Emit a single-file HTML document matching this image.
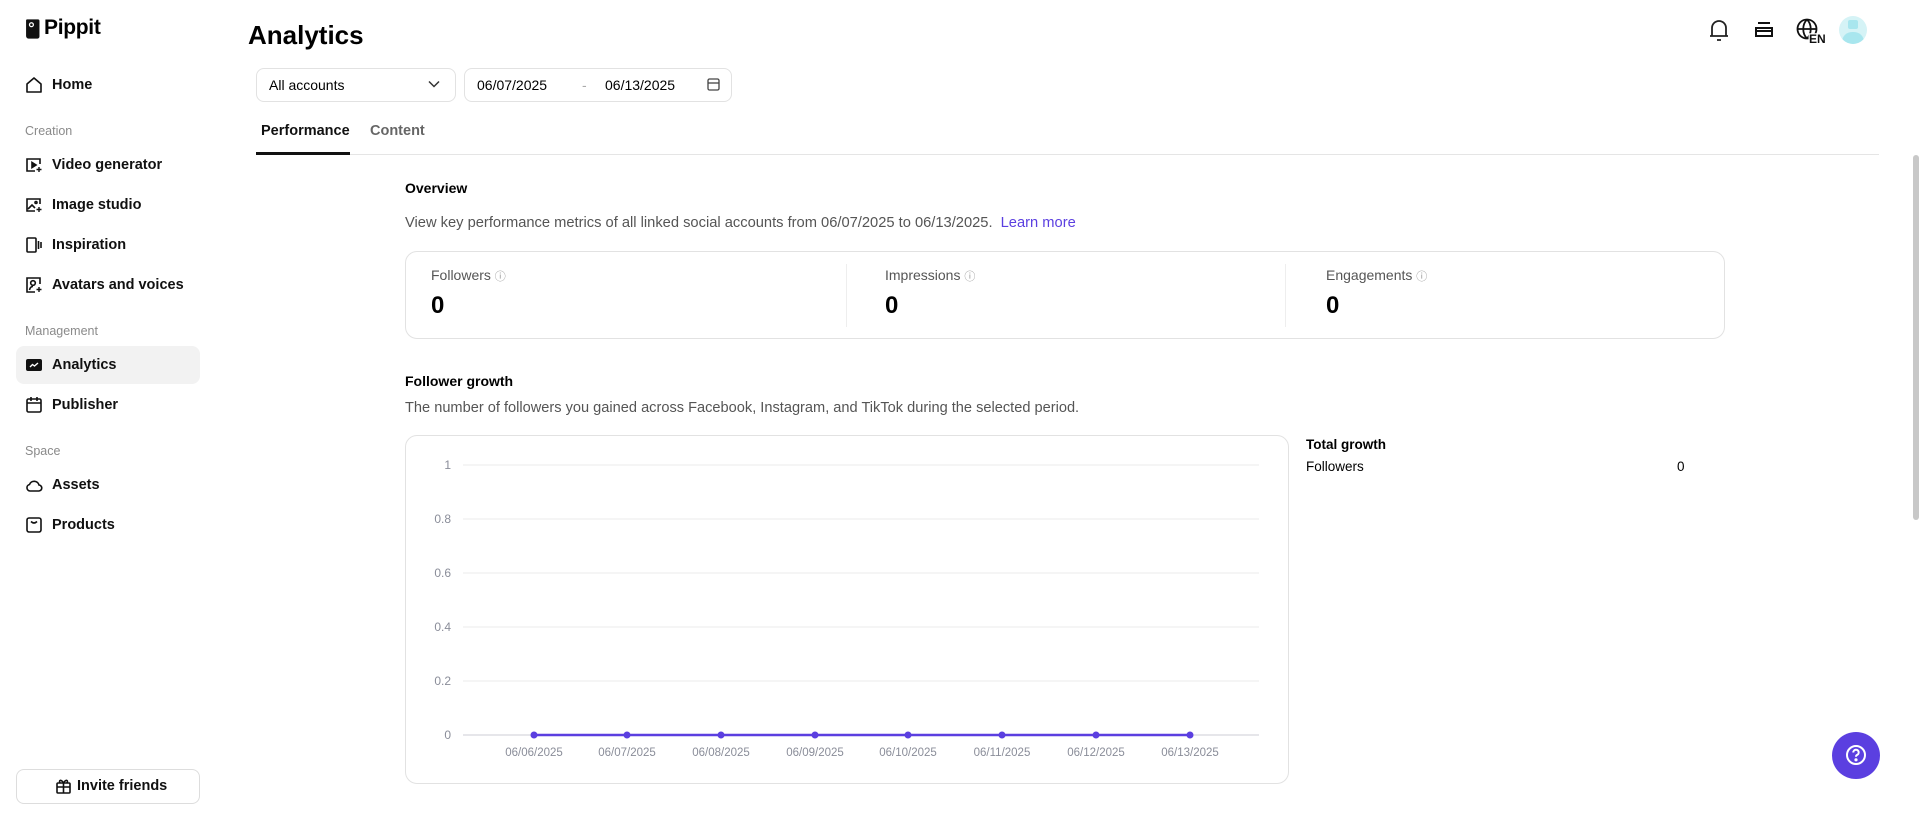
<!DOCTYPE html>
<html><head><meta charset="utf-8">
<style>
*{box-sizing:border-box;margin:0;padding:0}
body{width:1919px;height:813px;overflow:hidden;background:#fff;font-family:"Liberation Sans",sans-serif;color:#000;position:relative}
.a{position:absolute;white-space:nowrap}
.nav{font-size:14.5px;font-weight:bold;color:#111}
.sec{font-size:12.5px;color:#8a8a8a}
.ic{position:absolute;left:25px;width:18px;height:18px}
.gray{color:#555}
</style></head><body>

<!-- logo -->
<svg class="a" style="left:25px;top:18px" width="15" height="22" viewBox="0 0 14 20"><path d="M2 1h10a1.5 1.5 0 0 1 1.5 1.5V17a2 2 0 0 1-2 2H3.5A2.5 2.5 0 0 1 1 16.5V2a1 1 0 0 1 1-1z" fill="#111"/><circle cx="6" cy="6" r="1.8" fill="none" stroke="#fff" stroke-width="1.2"/></svg>
<div class="a" style="left:44px;top:16px;font-size:21px;font-weight:bold;letter-spacing:-0.3px">Pippit</div>

<svg class="ic" style="top:76px" viewBox="0 0 18 18" fill="none" stroke="#111" stroke-width="1.6"><path d="M2 8L9 2l7 6v8H2z" stroke-linejoin="round"/></svg>
<div class="a nav" style="left:52px;top:77px">Home</div>
<div class="a sec" style="left:25px;top:124px">Creation</div>
<svg class="ic" style="top:156px" viewBox="0 0 18 18" fill="none" stroke="#111" stroke-width="1.6"><path d="M15 8V3H2v12h8"/><path d="M7 6.5v5l4-2.5z" fill="#111"/><path d="M14 11v5M11.5 13.5h5" stroke-width="1.4"/></svg>
<div class="a nav" style="left:52px;top:157px">Video generator</div>
<svg class="ic" style="top:196px" viewBox="0 0 18 18" fill="none" stroke="#111" stroke-width="1.6"><path d="M15 8V3H2v12h8"/><path d="M3 13l4-4 3 3"/><circle cx="11" cy="6.5" r="1"/><path d="M14 11v5M11.5 13.5h5" stroke-width="1.4"/></svg>
<div class="a nav" style="left:52px;top:197px">Image studio</div>
<svg class="ic" style="top:236px" viewBox="0 0 18 18" fill="none" stroke="#111" stroke-width="1.6"><rect x="2" y="2" width="9" height="14" rx="1"/><path d="M13.5 5v8M16 6v6"/></svg>
<div class="a nav" style="left:52px;top:237px">Inspiration</div>
<svg class="ic" style="top:276px" viewBox="0 0 18 18" fill="none" stroke="#111" stroke-width="1.6"><path d="M15 8V2H2v14h8"/><circle cx="8" cy="7" r="2.3"/><path d="M4.5 14c.5-2.5 2-3.5 3.5-3.5"/><path d="M14 11v5M11.5 13.5h5" stroke-width="1.4"/></svg>
<div class="a nav" style="left:52px;top:277px">Avatars and voices</div>
<div class="a sec" style="left:25px;top:324px">Management</div>
<div class="a" style="left:16px;top:346px;width:184px;height:38px;background:#f2f2f2;border-radius:8px"></div>
<svg class="ic" style="top:356px" viewBox="0 0 18 18"><rect x="1" y="3" width="16" height="12" rx="2" fill="#111"/><path d="M5 11l2.5-2.5 2 1.5L13 7" fill="none" stroke="#fff" stroke-width="1.4"/></svg>
<div class="a nav" style="left:52px;top:357px">Analytics</div>
<svg class="ic" style="top:396px" viewBox="0 0 18 18" fill="none" stroke="#111" stroke-width="1.6"><rect x="2" y="3" width="14" height="13" rx="1.5"/><path d="M2 7h14M6 1v4M12 1v4"/></svg>
<div class="a nav" style="left:52px;top:397px">Publisher</div>
<div class="a sec" style="left:25px;top:444px">Space</div>
<svg class="ic" style="top:476px" viewBox="0 0 18 18" fill="none" stroke="#111" stroke-width="1.6"><path d="M5 15h8.5a3 3 0 0 0 .5-6 5 5 0 0 0-9.5-.5A3.3 3.3 0 0 0 5 15z"/></svg>
<div class="a nav" style="left:52px;top:477px">Assets</div>
<svg class="ic" style="top:516px" viewBox="0 0 18 18" fill="none" stroke="#111" stroke-width="1.6"><rect x="2" y="2" width="14" height="14" rx="2"/><path d="M6 5.5q3 3 6 0"/></svg>
<div class="a nav" style="left:52px;top:517px">Products</div>

<div class="a" style="left:16px;top:769px;width:184px;height:35px;border:1px solid #ddd;border-radius:8px"></div>
<svg class="a" style="left:55px;top:777px" width="17" height="18" viewBox="0 0 17 18" fill="none" stroke="#111" stroke-width="1.6"><rect x="2" y="6" width="13" height="10" rx="1"/><path d="M2 10h13M8.5 6v10M8.5 6C6 2 3.5 3 5 6M8.5 6c2.5-4 5-3 3.5 0"/></svg>
<div class="a nav" style="left:77px;top:778px">Invite friends</div>

<!-- header -->
<div class="a" style="left:248px;top:20px;font-size:26px;font-weight:bold">Analytics</div>
<svg class="a" style="left:1708px;top:18px" width="22" height="24" viewBox="0 0 22 24" fill="none" stroke="#222" stroke-width="1.8"><path d="M4 18V10a7 7 0 0 1 14 0v8M2 18h18M9 22h4"/></svg>
<svg class="a" style="left:1754px;top:20px" width="20" height="20" viewBox="0 0 20 20" fill="none" stroke="#111" stroke-width="2"><path d="M4 3h12M2 8h16v8H2z"/><path d="M2 11h16"/></svg>
<svg class="a" style="left:1796px;top:18px" width="34" height="26" viewBox="0 0 34 26" fill="none" stroke="#111" stroke-width="1.8"><circle cx="11" cy="11" r="9.5"/><path d="M1.5 11h19M11 1.5c-5 5-5 14 0 19M11 1.5c5 5 5 14 0 19"/><text x="13" y="25" font-family="Liberation Sans" font-weight="bold" font-size="12" fill="#111" stroke="#fff" stroke-width="2.5" paint-order="stroke">EN</text></svg>
<div class="a" style="left:1839px;top:16px;width:28px;height:28px;border-radius:50%;background:#d5f3f6;overflow:hidden"><div style="position:absolute;left:9px;top:4px;width:10px;height:9px;background:#a8e6ee;border-radius:2px"></div><div style="position:absolute;left:3px;top:16px;width:22px;height:16px;background:#a8e6ee;border-radius:10px 10px 0 0"></div></div>

<!-- filters -->
<div class="a" style="left:256px;top:68px;width:200px;height:34px;border:1px solid #e2e2e2;border-radius:8px"></div>
<div class="a" style="left:269px;top:77px;font-size:14px">All accounts</div>
<svg class="a" style="left:428px;top:80px" width="12" height="8" viewBox="0 0 12 8" fill="none" stroke="#333" stroke-width="1.5"><path d="M1 1.5l5 5 5-5"/></svg>
<div class="a" style="left:464px;top:68px;width:268px;height:34px;border:1px solid #e2e2e2;border-radius:8px"></div>
<div class="a" style="left:477px;top:77px;font-size:14px">06/07/2025</div>
<div class="a" style="left:582px;top:77px;font-size:14px;color:#aaa">-</div>
<div class="a" style="left:605px;top:77px;font-size:14px">06/13/2025</div>
<svg class="a" style="left:707px;top:77px" width="13" height="14" viewBox="0 0 13 14" fill="none" stroke="#444" stroke-width="1.3"><rect x="1" y="2" width="11" height="11" rx="1.5"/><path d="M1 6h11"/></svg>

<div class="a" style="left:261px;top:123px;font-size:14.5px;font-weight:bold;color:#111">Performance</div>
<div class="a" style="left:370px;top:123px;font-size:14.5px;font-weight:bold;color:#666">Content</div>
<div class="a" style="left:256px;top:154px;width:1623px;height:1px;background:#e5e5e5"></div>
<div class="a" style="left:256px;top:152px;width:94px;height:3px;background:#111"></div>

<!-- scrollbar -->
<div class="a" style="left:1913px;top:155px;width:6px;height:365px;background:#c8c8c8;border-radius:3px"></div>

<!-- overview -->
<div class="a" style="left:405px;top:180px;font-size:14px;font-weight:bold">Overview</div>
<div class="a gray" style="left:405px;top:215px;font-size:14.7px">View key performance metrics of all linked social accounts from 06/07/2025 to 06/13/2025. <span style="color:#5b3fe0;margin-left:4px">Learn more</span></div>
<div class="a" style="left:405px;top:251px;width:1320px;height:88px;border:1px solid #e2e2e2;border-radius:12px"></div>
<div class="a" style="left:846px;top:264px;width:1px;height:63px;background:#eee"></div>
<div class="a" style="left:1285px;top:264px;width:1px;height:63px;background:#eee"></div>
<div class="a gray" style="left:431px;top:267px;font-size:14px">Followers <span style="font-size:11px;color:#999">ⓘ</span></div>
<div class="a gray" style="left:885px;top:267px;font-size:14px">Impressions <span style="font-size:11px;color:#999">ⓘ</span></div>
<div class="a gray" style="left:1326px;top:267px;font-size:14px">Engagements <span style="font-size:11px;color:#999">ⓘ</span></div>
<div class="a" style="left:431px;top:292px;font-size:24px;font-weight:bold">0</div>
<div class="a" style="left:885px;top:292px;font-size:24px;font-weight:bold">0</div>
<div class="a" style="left:1326px;top:292px;font-size:24px;font-weight:bold">0</div>

<!-- follower growth -->
<div class="a" style="left:405px;top:373px;font-size:14px;font-weight:bold">Follower growth</div>
<div class="a gray" style="left:405px;top:400px;font-size:14.6px">The number of followers you gained across Facebook, Instagram, and TikTok during the selected period.</div>
<div class="a" style="left:405px;top:435px;width:884px;height:349px;border:1px solid #e2e2e2;border-radius:12px"></div>
<svg class="a" style="left:0;top:0" width="1919" height="813">
<g stroke="#f2f2f2" stroke-width="1.5"><path d="M463 465H1259M463 519H1259M463 573H1259M463 627H1259M463 681H1259"/></g>
<path d="M463 735H1259" stroke="#e6e6ea" stroke-width="2"/>
<g font-family="Liberation Sans" font-size="12" fill="#8a8d99" text-anchor="end"><text x="451" y="469">1</text><text x="451" y="523">0.8</text><text x="451" y="577">0.6</text><text x="451" y="631">0.4</text><text x="451" y="685">0.2</text><text x="451" y="739">0</text></g>
<path d="M534 735H1190" stroke="#5b3fe0" stroke-width="2.5"/>
<g fill="#5b3fe0"><circle cx="534" cy="735" r="3.5"/><circle cx="627" cy="735" r="3.5"/><circle cx="721" cy="735" r="3.5"/><circle cx="815" cy="735" r="3.5"/><circle cx="908" cy="735" r="3.5"/><circle cx="1002" cy="735" r="3.5"/><circle cx="1096" cy="735" r="3.5"/><circle cx="1190" cy="735" r="3.5"/></g>
<g font-family="Liberation Sans" font-size="11.5" fill="#8a8d99" text-anchor="middle"><text x="534" y="756">06/06/2025</text><text x="627" y="756">06/07/2025</text><text x="721" y="756">06/08/2025</text><text x="815" y="756">06/09/2025</text><text x="908" y="756">06/10/2025</text><text x="1002" y="756">06/11/2025</text><text x="1096" y="756">06/12/2025</text><text x="1190" y="756">06/13/2025</text></g>
</svg>
<div class="a" style="left:1306px;top:437px;font-size:13.5px;font-weight:bold">Total growth</div>
<div class="a" style="left:1306px;top:459px;font-size:13.5px">Followers</div>
<div class="a" style="left:1677px;top:459px;font-size:13.5px">0</div>

<!-- help -->
<div class="a" style="left:1832px;top:732px;width:48px;height:47px;border-radius:50%;background:#5b3fe0"></div>
<svg class="a" style="left:1844px;top:743px" width="24" height="24" viewBox="0 0 24 24" fill="none" stroke="#fff" stroke-width="2"><circle cx="12" cy="12" r="9"/><path d="M9.3 9.5a2.7 2.7 0 1 1 3.8 2.4c-.8.4-1.1.9-1.1 1.8"/><circle cx="12" cy="16.8" r=".6" fill="#fff"/></svg>
</body></html>
